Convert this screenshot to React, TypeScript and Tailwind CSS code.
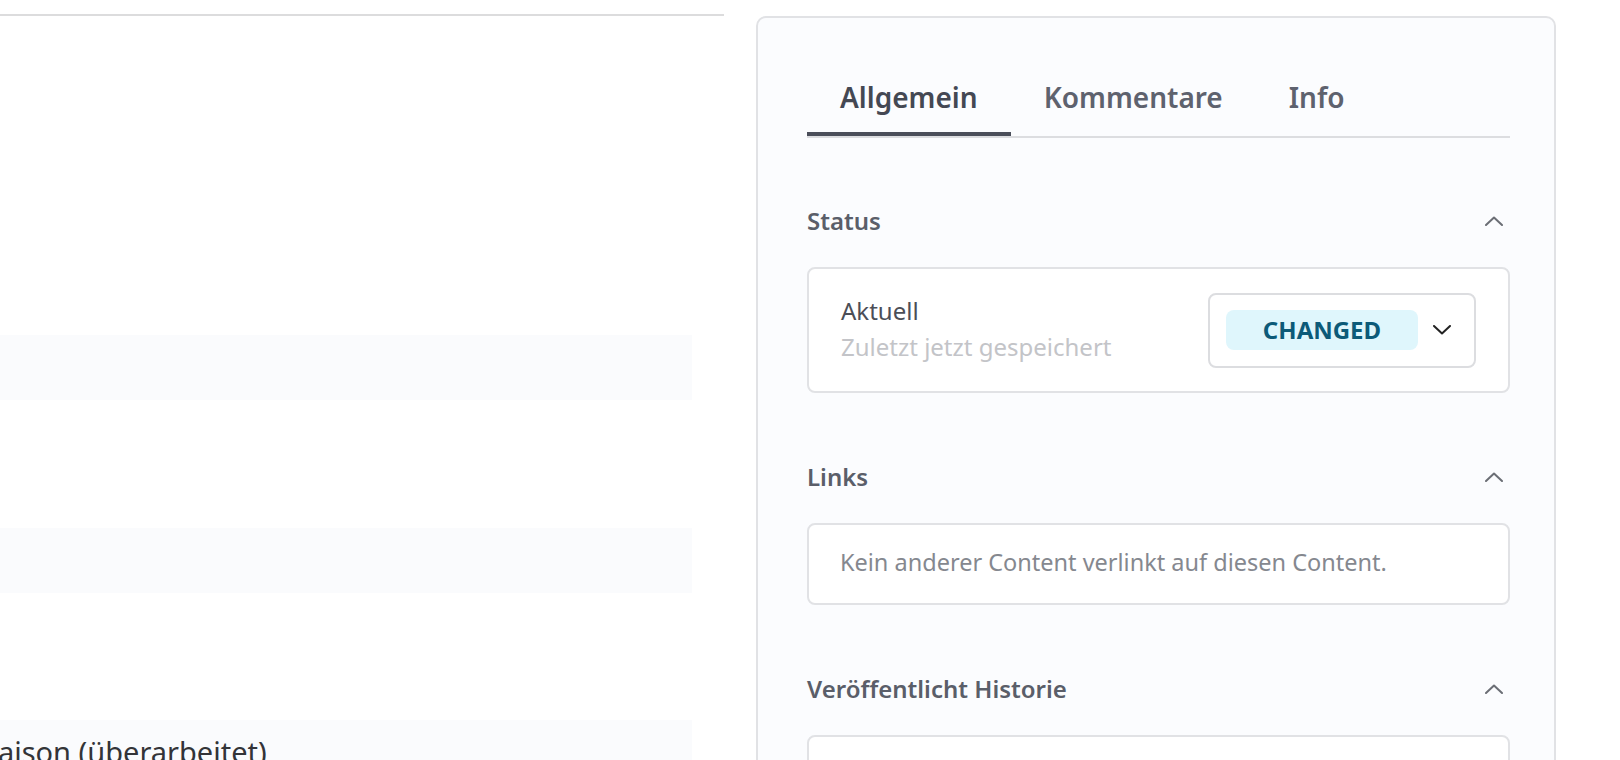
import type { ReactNode } from "react";

const FONT = "font-['Noto_Sans','Open_Sans',sans-serif]";

function ChevronUp() {
  return (
    <svg width="18" height="10" viewBox="0 0 18 10" fill="none" className="mr-[7px]">
      <polyline points="1,9 9,1.5 17,9" stroke="#6b6e75" strokeWidth="2" strokeLinecap="round" strokeLinejoin="round" />
    </svg>
  );
}

function ChevronDown() {
  return (
    <svg width="18" height="10" viewBox="0 0 18 10" fill="none">
      <polyline points="1,1 9,8.5 17,1" stroke="#222" strokeWidth="2" strokeLinecap="round" strokeLinejoin="round" />
    </svg>
  );
}

function SectionHeader({ title }: { title: string }) {
  return (
    <div className="flex h-[33px] items-center justify-between">
      <span className="text-[24px] leading-[33px] font-semibold text-[#5a5e69]">{title}</span>
      <ChevronUp />
    </div>
  );
}

function Box({ children, className = "" }: { children?: ReactNode; className?: string }) {
  return (
    <div className={`rounded-[8px] border-2 border-[#e1e2e5] bg-white ${className}`}>{children}</div>
  );
}

const tabs = ["Allgemein", "Kommentare", "Info"];

export default function App() {
  return (
    <div className={`flex h-[760px] w-[1620px] overflow-hidden bg-white ${FONT}`}>
      {/* left editor area, cut off */}
      <div className="w-[724px] shrink-0 overflow-hidden">
        <div className="h-[16px] border-b-2 border-[#dcdcdd]" />
        <div className="pr-[32px]">
          <div className="mt-[319px] h-[65px] bg-[#fafbfd]" />
          <div className="mt-[128px] h-[65px] bg-[#fafbfd]" />
          <div className="mt-[127px] h-[65px] bg-[#fafbfd] pt-[13px]">
            <div className="ml-[-18px] whitespace-nowrap text-[29px] leading-[38px] text-[#333438]">
              Saison (überarbeitet)
            </div>
          </div>
        </div>
      </div>

      {/* sidebar card */}
      <div className="mt-[16px] ml-[32px] h-[800px] w-[800px] shrink-0 rounded-[10px] border-2 border-[#e1e2e5] bg-[#fbfcfe] pl-[49px] pr-[44px]">
        <div className="flex border-b-2 border-[#dcdde0] pt-[60px]">
          {tabs.map((t, i) => (
            <div
              key={t}
              className={`border-b-4 px-[33px] pb-[16px] text-[28px] leading-[38px] font-semibold ${
                i === 0 ? "border-[#4a4e5a] text-[#444853]" : "border-transparent text-[#5e626e]"
              }`}
            >
              {t}
            </div>
          ))}
        </div>

        <div className="mt-[66px]">
          <SectionHeader title="Status" />
        </div>
        <Box className="mt-[30px] flex h-[126px] items-center justify-between pl-[32px] pr-[32px]">
          <div className="mb-[2px] text-[24px] leading-[34px]">
            <div className="text-[#4b4e57]">Aktuell</div>
            <div className="mt-[2px] text-[#c3c4c8]">Zuletzt jetzt gespeichert</div>
          </div>
          <div className="flex h-[75px] w-[268px] items-center rounded-[8px] border-2 border-[#dcdde0] bg-white pl-[16px]">
            <div className="flex h-[40px] w-[192px] items-center justify-center rounded-[8px] bg-[#dff6fc] text-[24px] font-bold text-[#0c5a78]">
              CHANGED
            </div>
            <div className="ml-[15px]">
              <ChevronDown />
            </div>
          </div>
        </Box>

        <div className="mt-[67px]">
          <SectionHeader title="Links" />
        </div>
        <Box className="mt-[30px] flex h-[82px] items-center px-[31px] pb-[3px]">
          <span className="text-[23.5px] leading-[33px] text-[#85888f]">
            Kein anderer Content verlinkt auf diesen Content.
          </span>
        </Box>

        <div className="mt-[67px]">
          <SectionHeader title="Veröffentlicht Historie" />
        </div>
        <Box className="mt-[30px] h-[120px]" />
      </div>
    </div>
  );
}
